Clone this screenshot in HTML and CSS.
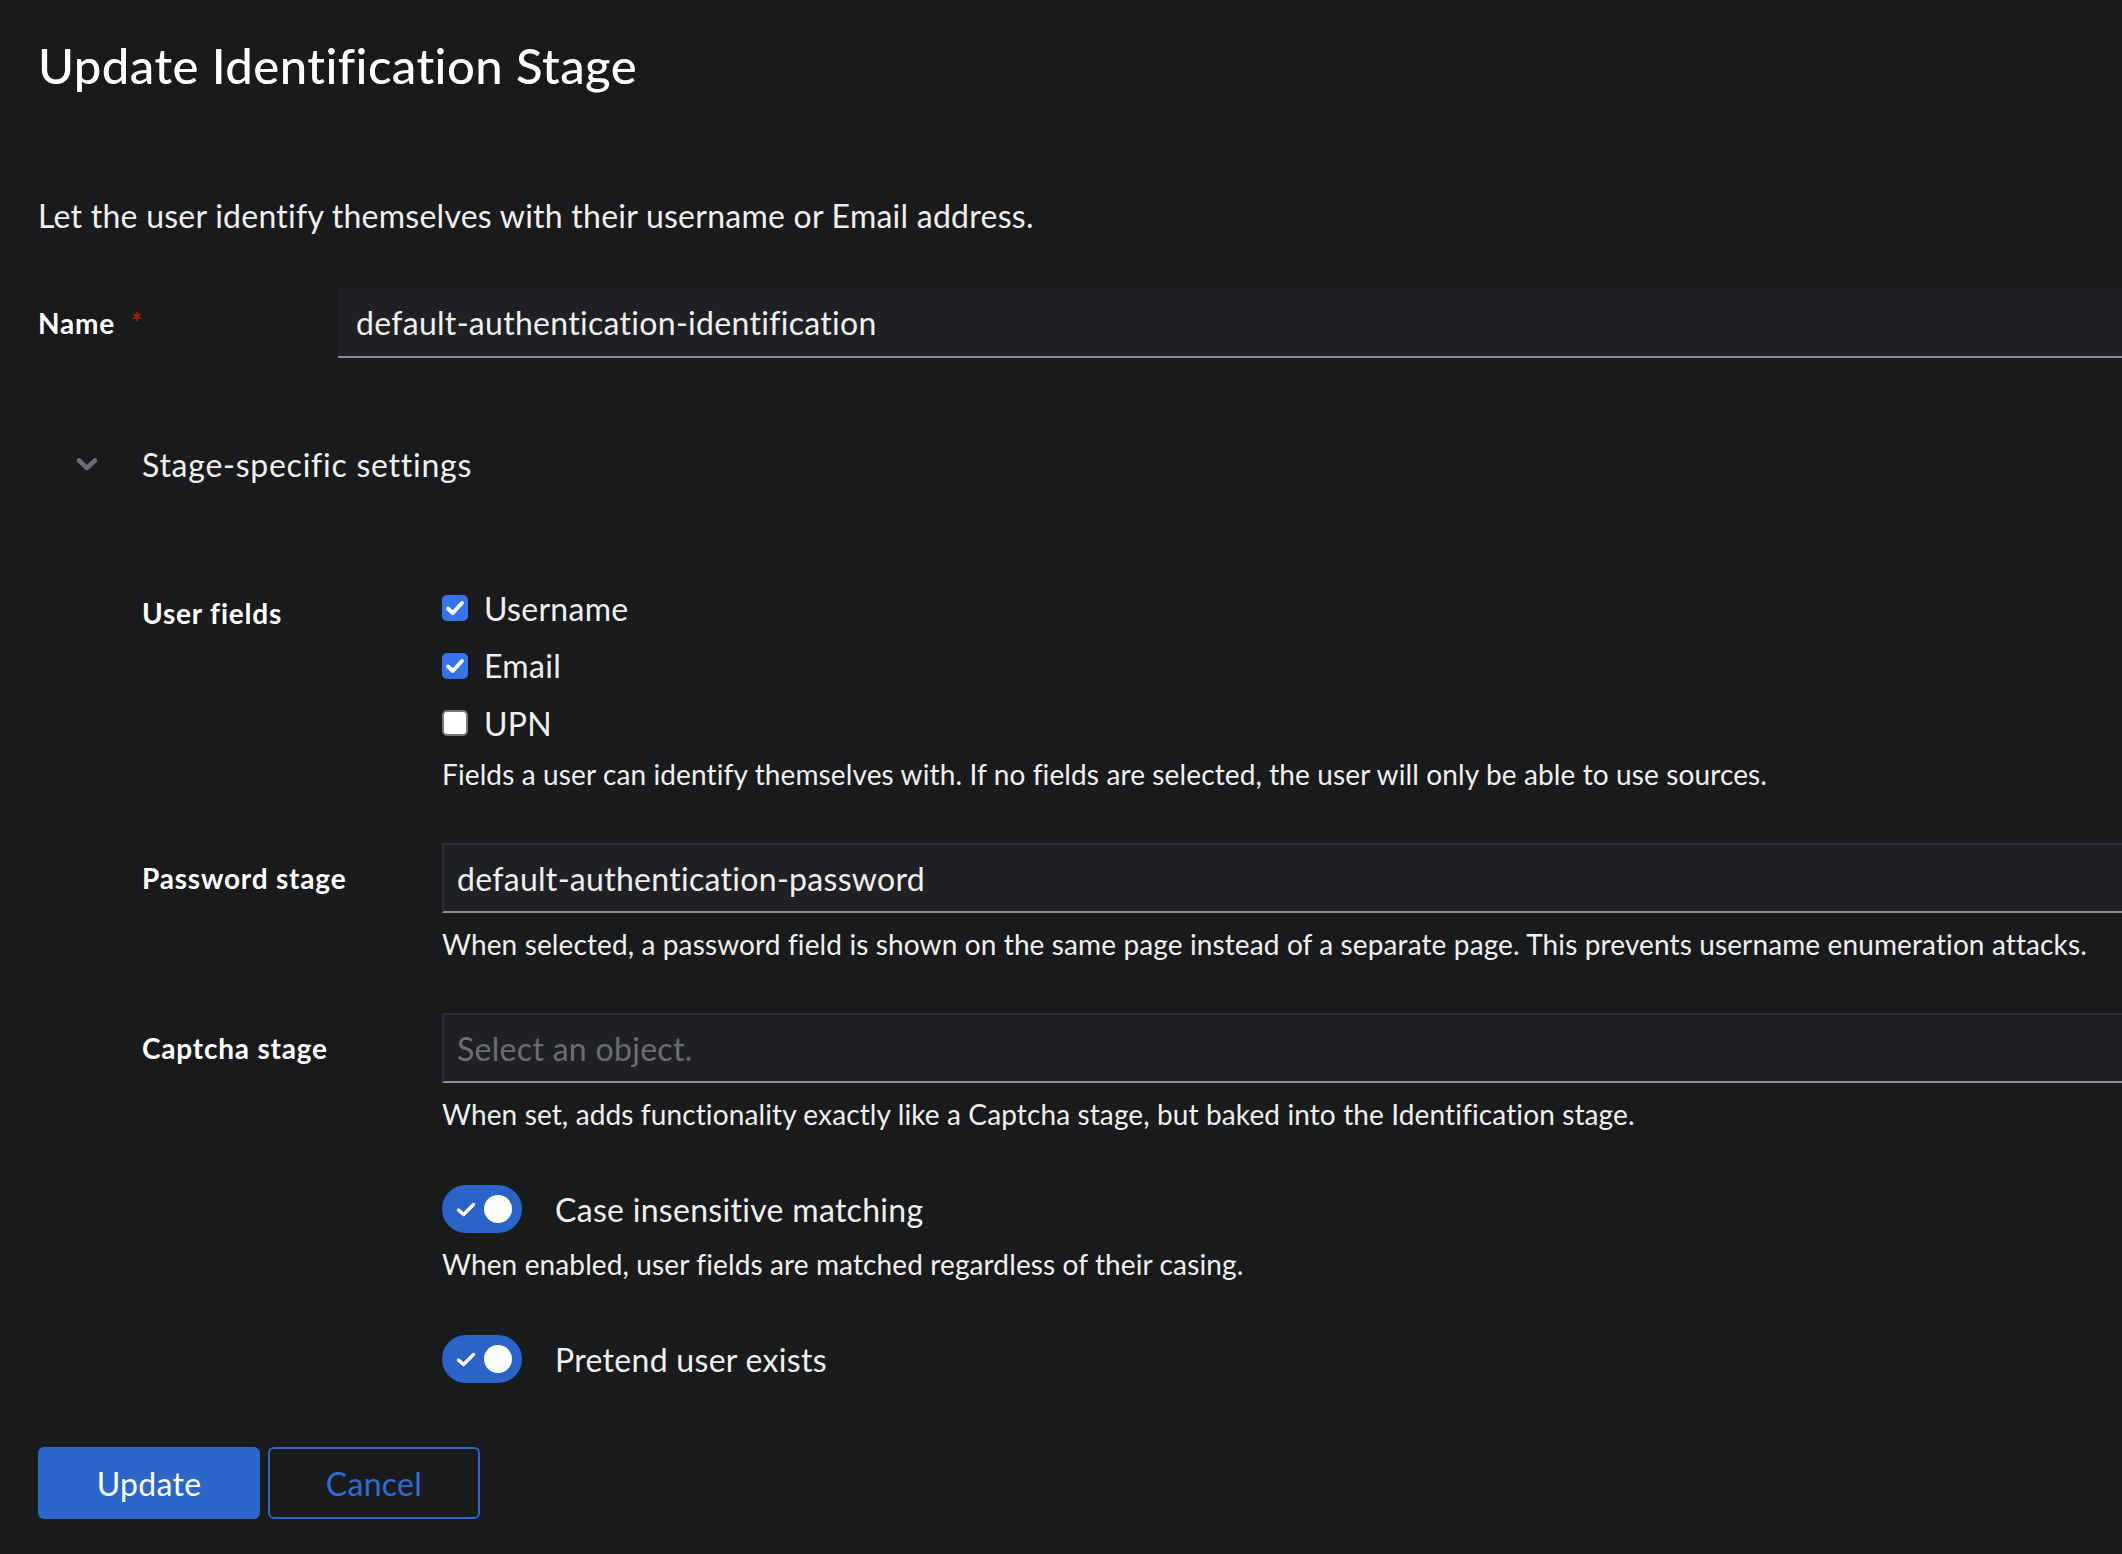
FILE: index.html
```html
<!DOCTYPE html>
<html lang="en">
<head>
<meta charset="utf-8">
<title>Update Identification Stage</title>
<link rel="stylesheet" href="styles.css">
</head>
<body>
<div class="page">
  <h1 class="title">Update Identification Stage</h1>
  <p class="desc">Let the user identify themselves with their username or Email address.</p>
  <form class="form">
    <div class="row">
      <div class="label">Name <span class="req">*</span></div>
      <div class="control">
        <div class="input plain">default-authentication-identification</div>
      </div>
    </div>

    <div class="expand">
      <div class="expand-toggle">
        <svg class="chev" width="20" height="13" viewBox="0 0 20 13"><path d="M2 2.5 L10 10 L18 2.5" fill="none" stroke="#6a6e73" stroke-width="4.5" stroke-linecap="round" stroke-linejoin="round"/></svg>
        <span class="expand-text">Stage-specific settings</span>
      </div>
      <div class="expand-body">
        <div class="row">
          <div class="label lbl-check">User fields</div>
          <div class="control">
            <div class="checks">
              <div class="check"><span class="box on"><svg width="20" height="16" viewBox="0 0 20 16"><path d="M3 8.5 L7.8 13 L17 3" fill="none" stroke="#fff" stroke-width="3.8" stroke-linecap="round" stroke-linejoin="round"/></svg></span><span>Username</span></div>
              <div class="check"><span class="box on"><svg width="20" height="16" viewBox="0 0 20 16"><path d="M3 8.5 L7.8 13 L17 3" fill="none" stroke="#fff" stroke-width="3.8" stroke-linecap="round" stroke-linejoin="round"/></svg></span><span>Email</span></div>
              <div class="check"><span class="box off"></span><span>UPN</span></div>
            </div>
            <p class="helper">Fields a user can identify themselves with. If no fields are selected, the user will only be able to use sources.</p>
          </div>
        </div>

        <div class="row">
          <div class="label">Password stage</div>
          <div class="control">
            <div class="input select">default-authentication-password</div>
            <p class="helper">When selected, a password field is shown on the same page instead of a separate page. This prevents username enumeration attacks.</p>
          </div>
        </div>

        <div class="row">
          <div class="label">Captcha stage</div>
          <div class="control">
            <div class="input select placeholder">Select an object.</div>
            <p class="helper">When set, adds functionality exactly like a Captcha stage, but baked into the Identification stage.</p>
          </div>
        </div>

        <div class="row">
          <div class="label"></div>
          <div class="control">
            <div class="switch-row">
              <span class="switch"><svg class="sw-check" width="20" height="15" viewBox="0 0 20 15"><path d="M2.5 8 L7.5 12.5 L17.5 2.5" fill="none" stroke="#fff" stroke-width="3.4" stroke-linecap="round" stroke-linejoin="round"/></svg><span class="knob"></span></span>
              <span class="switch-label">Case insensitive matching</span>
            </div>
            <p class="helper">When enabled, user fields are matched regardless of their casing.</p>
          </div>
        </div>

        <div class="row">
          <div class="label"></div>
          <div class="control">
            <div class="switch-row">
              <span class="switch"><svg class="sw-check" width="20" height="15" viewBox="0 0 20 15"><path d="M2.5 8 L7.5 12.5 L17.5 2.5" fill="none" stroke="#fff" stroke-width="3.4" stroke-linecap="round" stroke-linejoin="round"/></svg><span class="knob"></span></span>
              <span class="switch-label">Pretend user exists</span>
            </div>
          </div>
        </div>
      </div>
    </div>

    <div class="actions">
      <button type="button" class="btn primary">Update</button>
      <button type="button" class="btn secondary">Cancel</button>
    </div>
  </form>
</div>
</body>
</html>
```

FILE: styles.css
```css
html, body {
  margin: 0;
  padding: 0;
  background: #191a1c;
}
body {
  font-family: "Lato", "Liberation Sans", sans-serif;
  font-variant-ligatures: none;
  color: #f0f0f0;
  width: 2122px;
  overflow: hidden;
}
.page {
  padding: 33px 0 40px 38px;
}
.title {
  margin: 0;
  font-size: 49px;
  line-height: 64px;
  font-weight: 500;
  letter-spacing: 0.45px;
  color: #ffffff;
}
.desc {
  margin: 95px 0 0 0;
  font-size: 32px;
  line-height: 48px;
  letter-spacing: 0.25px;
}
.form {
  margin-top: 48px;
  display: flex;
  flex-direction: column;
}
.row {
  display: grid;
  grid-template-columns: 300px 1fr;
}
.label {
  font-size: 28px;
  font-weight: 700;
  line-height: 36px;
  padding-top: 17px;
  letter-spacing: 0.8px;
  color: #ffffff;
}
.lbl-check { padding-top: 17px; }
.req {
  color: #c9190b;
  font-weight: 400;
  margin-left: 8px;
}
.control {
  display: flex;
  flex-direction: column;
  min-width: 0;
}
.input {
  box-sizing: border-box;
  height: 70px;
  font-size: 32px;
  line-height: 70px;
  letter-spacing: 0.3px;
  background: #1f2024;
  border-bottom: 2px solid #8a8d90;
  white-space: nowrap;
}
.input.plain {
  padding-left: 18px;
}
.input.select {
  border-top: 2px solid #2c2e32;
  border-left: 2px solid #2c2e32;
  line-height: 68px;
  padding-left: 13px;
}
.input.placeholder {
  color: #6a6e73;
}
.helper {
  margin: 11px 0 0 0;
  font-size: 28px;
  line-height: 40px;
  letter-spacing: 0.12px;
  color: #f0f0f0;
}
.expand {
  margin-top: 82px;
}
.expand-toggle {
  display: flex;
  align-items: center;
  height: 48px;
  padding-left: 39px;
}
.chev { flex: none; }
.expand-text {
  margin-left: 45px;
  font-size: 32px;
  letter-spacing: 0.75px;
}
.expand-body {
  margin-top: 90px;
  padding-left: 104px;
  display: flex;
  flex-direction: column;
  gap: 49px;
}
.expand-body > .row:nth-child(4),
.expand-body > .row:nth-child(5) {
  margin-top: 2px;
}
.checks {
  display: flex;
  flex-direction: column;
  gap: 17.5px;
  padding-top: 10px;
}
.check {
  display: flex;
  align-items: center;
  height: 40px;
  font-size: 32px;
  letter-spacing: 0.3px;
}
.box {
  box-sizing: border-box;
  width: 26px;
  height: 26px;
  border-radius: 5px;
  margin-right: 16px;
  display: flex;
  align-items: center;
  justify-content: center;
  flex: none;
}
.box.on { background: #3574ec; }
.box.off { background: #ffffff; border: 2px solid #767676; }
.switch-row {
  display: flex;
  align-items: center;
  height: 48px;
}
.switch {
  position: relative;
  width: 80px;
  height: 48px;
  border-radius: 24px;
  background: #2b64c8;
  flex: none;
}
.sw-check {
  position: absolute;
  left: 14px;
  top: 17px;
}
.knob {
  position: absolute;
  right: 10px;
  top: 10px;
  width: 28px;
  height: 28px;
  border-radius: 50%;
  background: #ffffff;
}
.switch-label {
  margin-left: 33px;
  font-size: 32px;
  letter-spacing: 0.3px;
}
.actions {
  margin-top: 64px;
  display: flex;
  gap: 8px;
}
.btn {
  box-sizing: border-box;
  height: 72px;
  font-family: inherit;
  font-size: 32px;
  letter-spacing: 0.3px;
  border-radius: 6px;
  cursor: pointer;
}
.btn.primary {
  width: 222px;
  background: #2b66c9;
  color: #ffffff;
  border: none;
}
.btn.secondary {
  width: 212px;
  background: transparent;
  color: #2f6bd0;
  border: 2px solid #2b66c9;
}
```
